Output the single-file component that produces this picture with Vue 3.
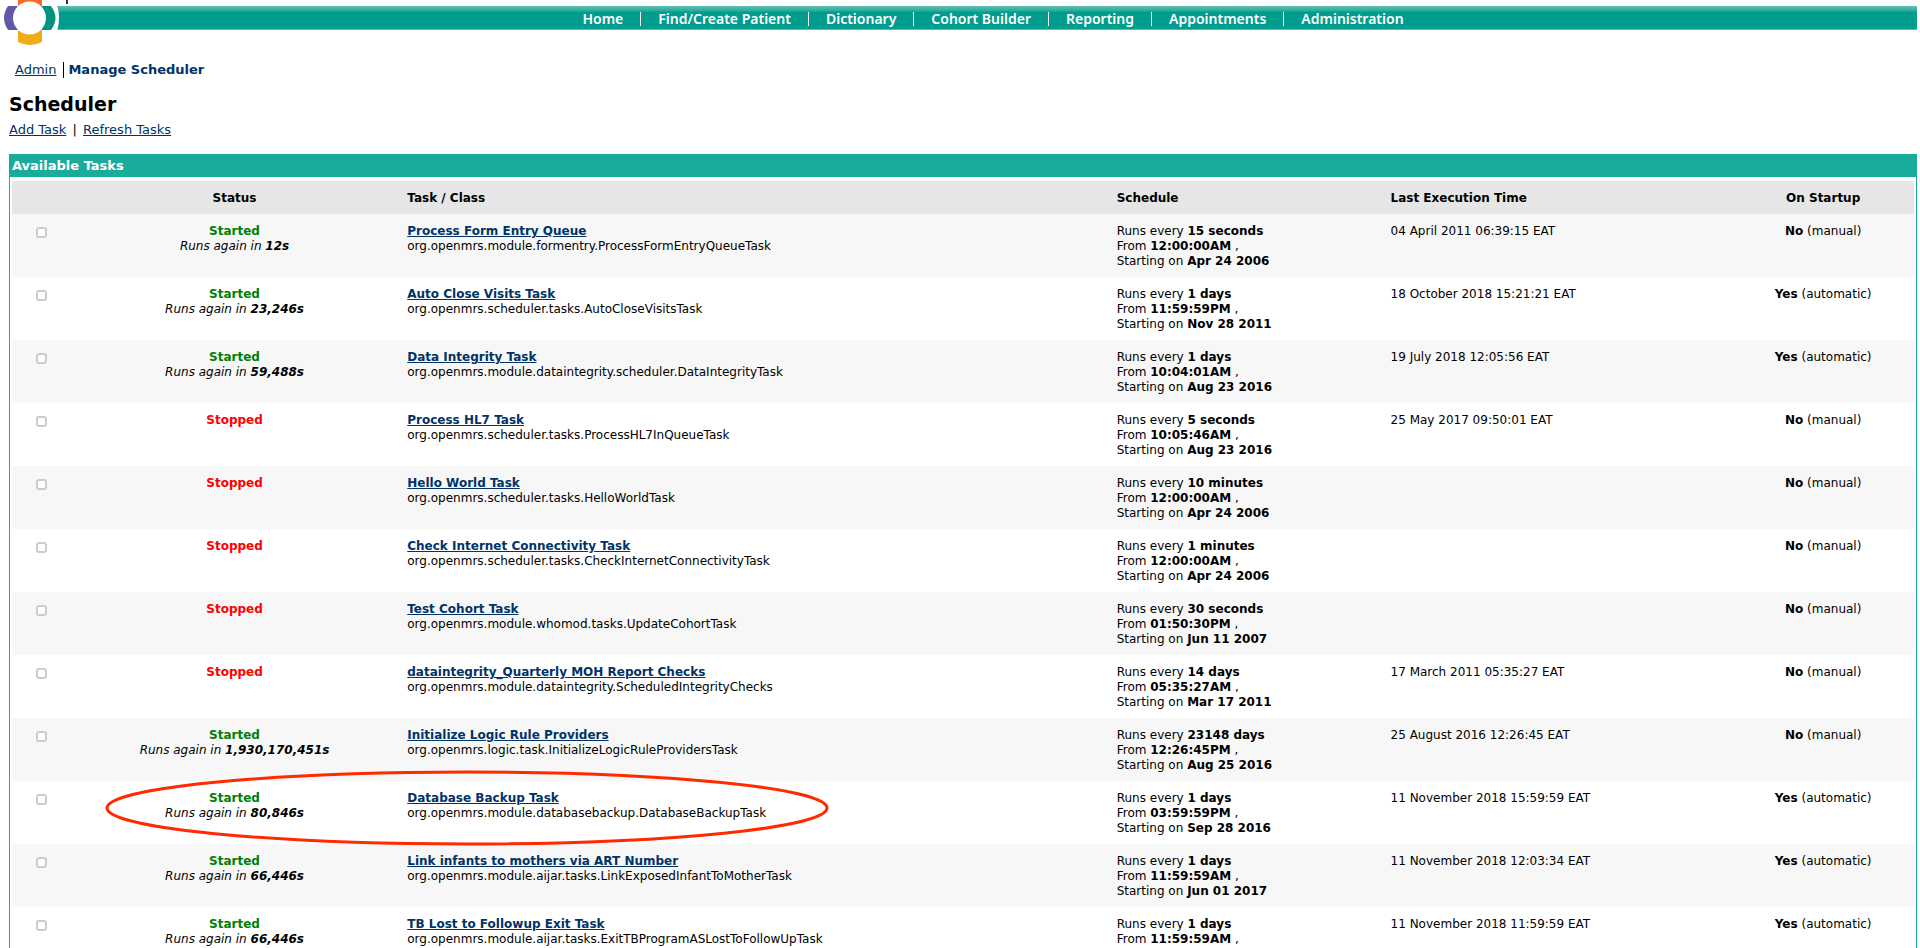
<script setup>
const navItems = ['Home', 'Find/Create Patient', 'Dictionary', 'Cohort Builder', 'Reporting', 'Appointments', 'Administration']

const tasks = [
  { next: '12s', name: 'Process Form Entry Queue', cls: 'org.openmrs.module.formentry.ProcessFormEntryQueueTask', every: '15 seconds', from: '12:00:00AM', start: 'Apr 24 2006', last: '04 April 2011 06:39:15 EAT', auto: false },
  { next: '23,246s', name: 'Auto Close Visits Task', cls: 'org.openmrs.scheduler.tasks.AutoCloseVisitsTask', every: '1 days', from: '11:59:59PM', start: 'Nov 28 2011', last: '18 October 2018 15:21:21 EAT', auto: true },
  { next: '59,488s', name: 'Data Integrity Task', cls: 'org.openmrs.module.dataintegrity.scheduler.DataIntegrityTask', every: '1 days', from: '10:04:01AM', start: 'Aug 23 2016', last: '19 July 2018 12:05:56 EAT', auto: true },
  { next: '', name: 'Process HL7 Task', cls: 'org.openmrs.scheduler.tasks.ProcessHL7InQueueTask', every: '5 seconds', from: '10:05:46AM', start: 'Aug 23 2016', last: '25 May 2017 09:50:01 EAT', auto: false },
  { next: '', name: 'Hello World Task', cls: 'org.openmrs.scheduler.tasks.HelloWorldTask', every: '10 minutes', from: '12:00:00AM', start: 'Apr 24 2006', last: '', auto: false },
  { next: '', name: 'Check Internet Connectivity Task', cls: 'org.openmrs.scheduler.tasks.CheckInternetConnectivityTask', every: '1 minutes', from: '12:00:00AM', start: 'Apr 24 2006', last: '', auto: false },
  { next: '', name: 'Test Cohort Task', cls: 'org.openmrs.module.whomod.tasks.UpdateCohortTask', every: '30 seconds', from: '01:50:30PM', start: 'Jun 11 2007', last: '', auto: false },
  { next: '', name: 'dataintegrity_Quarterly MOH Report Checks', cls: 'org.openmrs.module.dataintegrity.ScheduledIntegrityChecks', every: '14 days', from: '05:35:27AM', start: 'Mar 17 2011', last: '17 March 2011 05:35:27 EAT', auto: false },
  { next: '1,930,170,451s', name: 'Initialize Logic Rule Providers', cls: 'org.openmrs.logic.task.InitializeLogicRuleProvidersTask', every: '23148 days', from: '12:26:45PM', start: 'Aug 25 2016', last: '25 August 2016 12:26:45 EAT', auto: false },
  { next: '80,846s', name: 'Database Backup Task', cls: 'org.openmrs.module.databasebackup.DatabaseBackupTask', every: '1 days', from: '03:59:59PM', start: 'Sep 28 2016', last: '11 November 2018 15:59:59 EAT', auto: true, marked: true },
  { next: '66,446s', name: 'Link infants to mothers via ART Number', cls: 'org.openmrs.module.aijar.tasks.LinkExposedInfantToMotherTask', every: '1 days', from: '11:59:59AM', start: 'Jun 01 2017', last: '11 November 2018 12:03:34 EAT', auto: true },
  { next: '66,446s', name: 'TB Lost to Followup Exit Task', cls: 'org.openmrs.module.aijar.tasks.ExitTBProgramASLostToFollowUpTask', every: '1 days', from: '11:59:59AM', start: '', last: '11 November 2018 11:59:59 EAT', auto: true }
]
</script>

<template>
  <div class="page">
    <header class="banner">
      <svg class="logo" width="70" height="48" viewBox="0 0 70 48" aria-hidden="true">
        <path d="M44 5H57Q61 18 57 31H44Z" fill="#fff" />
        <path d="M18 0H42V8H18Z" fill="#f76b26" />
        <path d="M8 6H20V30H8Q0 18 8 6Z" fill="#5f59a8" />
        <path d="M40 6H51Q60 18 51 30H40Z" fill="#009384" />
        <path d="M18 28H42V42Q30 48 18 42Z" fill="#f0ab17" />
        <circle cx="29.500" cy="18" r="16.500" fill="#fff" />
        <path d="M66 0H68V4H66Z" fill="#333" />
      </svg>
      <nav class="bar">
        <a v-for="item in navItems" :key="item" href="#">{{ item }}</a>
      </nav>
    </header>

    <main>
      <nav class="crumbs">
        <a href="#">Admin</a>
        <strong>Manage Scheduler</strong>
      </nav>
      <h1>Scheduler</h1>
      <p class="actions"><a href="#">Add Task</a> <span>|</span> <a href="#">Refresh Tasks</a></p>

      <h2>Available Tasks</h2>
      <div class="box">
        <table>
          <colgroup>
            <col class="c-check" /><col class="c-status" /><col class="c-task" />
            <col class="c-schedule" /><col class="c-last" /><col />
          </colgroup>
          <thead>
            <tr>
              <th></th>
              <th class="center">Status</th>
              <th>Task / Class</th>
              <th>Schedule</th>
              <th>Last Execution Time</th>
              <th class="center">On Startup</th>
            </tr>
          </thead>
          <tbody>
            <tr v-for="task in tasks" :key="task.name">
              <td class="pick">
                <input type="checkbox" :aria-label="task.name" />
                <svg v-if="task.marked" class="ring" viewBox="0 0 724 78" aria-hidden="true">
                  <ellipse cx="362" cy="39" rx="360" ry="36" fill="none" stroke="#ff2a00" stroke-width="3" />
                </svg>
              </td>
              <td class="center">
                <template v-if="task.next">
                  <b class="started">Started</b><br />
                  <i>Runs again in <b>{{ task.next }}</b></i>
                </template>
                <b v-else class="stopped">Stopped</b>
              </td>
              <td><a class="name" href="#">{{ task.name }}</a><br />{{ task.cls }}</td>
              <td>
                Runs every <b>{{ task.every }}</b><br />
                From <b>{{ task.from }}</b> ,
                <template v-if="task.start"><br />Starting on <b>{{ task.start }}</b></template>
              </td>
              <td>{{ task.last }}</td>
              <td class="center"><b>{{ task.auto ? 'Yes' : 'No' }}</b> ({{ task.auto ? 'automatic' : 'manual' }})</td>
            </tr>
          </tbody>
        </table>
      </div>
    </main>
  </div>
</template>

<style>
body {
  margin: 0;
  background: #fff;
}
</style>

<style scoped>
.page {
  height: 100vh;
  overflow: hidden;
  font: 12px/15px Verdana, "DejaVu Sans", sans-serif;
  color: #000;
}
a {
  color: #003366;
}
.banner {
  display: flex;
  align-items: flex-start;
  height: 48px;
}
.logo {
  position: relative;
  z-index: 1;
  flex: none;
  margin-right: -13px;
}
.bar {
  flex: 1;
  display: flex;
  justify-content: center;
  align-items: center;
  box-sizing: border-box;
  height: 24px;
  margin-top: 6px;
  margin-right: 3px;
  padding-top: 2px;
  padding-left: 12px;
  border-bottom: 1px solid #5cbcb1;
  background: linear-gradient(#5cc0b5, #2aa999 5px, #009c8e 6px);
}
.bar a {
  padding: 0 17px;
  font: 600 14px/14px "Noto Sans", sans-serif;
  color: #fff;
  text-decoration: none;
}
.bar a + a {
  border-left: 1px solid #fff;
}
main {
  padding: 0 3px 0 9px;
}
.crumbs {
  display: flex;
  padding: 14px 0 0 6px;
  font-size: 13px;
  line-height: 16px;
  color: #003366;
}
.crumbs strong {
  margin-left: 7px;
  padding-left: 4px;
  border-left: 1px solid #000;
}
h1 {
  margin: 14px 0 0;
  font-size: 19px;
  line-height: 24px;
}
.actions {
  margin: 6px 0 0;
  font-size: 13px;
  line-height: 16px;
}
.actions span {
  padding: 0 2px;
}
h2 {
  margin: 16px 0 0;
  padding: 0 3px;
  font-size: 13px;
  line-height: 23px;
  color: #fff;
  background: #1aac9b;
}
.box {
  padding: 4px 2px 2px;
  border: 1px solid #1aac9b;
  border-top: 0;
}
table {
  width: 100%;
  table-layout: fixed;
  border-collapse: collapse;
}
.c-check { width: 3.25%; }
.c-status { width: 16.9%; }
.c-task { width: 37.3%; }
.c-schedule { width: 14.4%; }
.c-last { width: 18.6%; }
th,
td {
  padding: 10px 12px 8px;
  text-align: left;
  vertical-align: top;
}
th {
  height: 15px;
  background: #e6e6e6;
}
tbody tr:nth-child(odd) {
  background: #f7f7f7;
}
.center {
  text-align: center;
}
.pick {
  position: relative;
  padding: 13px 0 0 24px;
  line-height: 0;
}
.pick input {
  appearance: none;
  box-sizing: border-box;
  width: 11px;
  height: 11px;
  margin: 0;
  border: 2px solid #ccc;
  border-radius: 3px;
  background: #fff;
}
.pick input:checked {
  background: #1aac9b;
}
.ring {
  position: absolute;
  z-index: 1;
  top: -12px;
  left: 93px;
  width: 724px;
  height: 78px;
  pointer-events: none;
}
.started {
  color: #008000;
}
.stopped {
  color: #f00;
}
.name {
  font-weight: bold;
}
</style>
